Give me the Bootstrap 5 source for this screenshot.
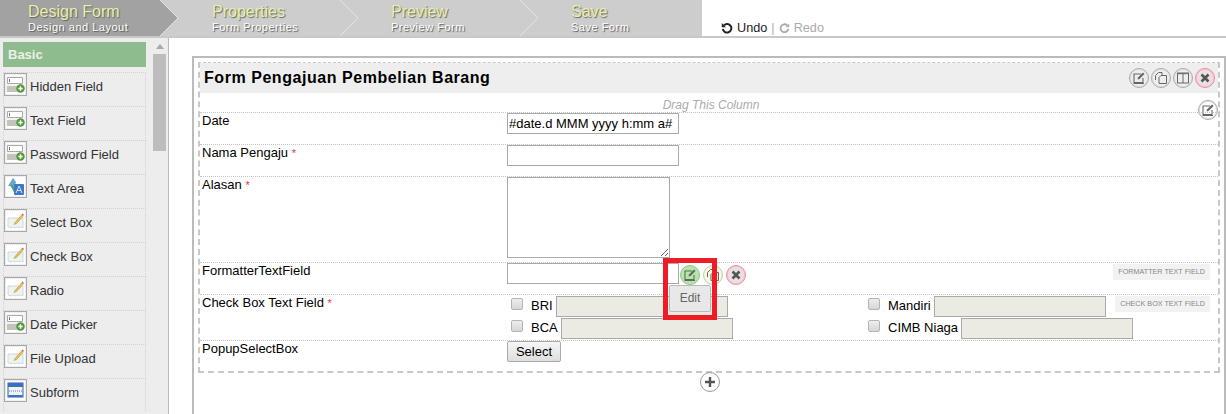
<!DOCTYPE html>
<html lang="id">
<head>
    <meta charset="UTF-8">
    <meta name="viewport" content="width=device-width, initial-scale=1">
    <title>Design Form</title>
    <link href="https://cdn.jsdelivr.net/npm/bootstrap@5.3.0/dist/css/bootstrap.min.css" rel="stylesheet">
    <style>
        html, body { height: 414px; overflow: hidden; }
        body { font-family: "Liberation Sans", Arial, sans-serif; font-size: 13px; line-height: 16px; color: #000; background: #fff; }

        /* wizard bar */
        .wiz-bar { height: 38px; border-bottom: 2px solid #c8c8c8; }
        .wiz-steps { width: 702px; height: 36px; background: #cdcdcd; }
        .wiz-step { width: 180px; height: 36px; position: relative; padding-left: 51px; flex: none; }
        .wiz-step:first-child { width: 160px; padding-left: 28px; background: #a2a2a2; }
        .wiz-step:nth-child(2) { padding-left: 52px; }
        .wiz-step:last-child { width: 182px; }
        .wiz-title { position: relative; font-size: 16px; line-height: 18px; padding-top: 3px; color: #e6f0a8; text-shadow: 1px 1px 1px #666; white-space: nowrap; }
        .wiz-sub { position: relative; font-size: 11px; line-height: 13px; color: #fff; text-shadow: 1px 1px 1px #555; white-space: nowrap; letter-spacing: .5px; }
        .wiz-arrow { position: absolute; top: 0; left: 100%; }
        .undo-box { padding: 19px 0 0 19px; font-size: 12.7px; line-height: 16px; color: #222; }
        .undo-box .off { color: #aaa; }

        /* main */
        .work { height: 376px; }
        .side { width: 169px; flex: none; background: #ededed; border-right: 1px solid #bbb; position: relative; overflow: hidden; padding: 4px 0 0 3px; }
        .side-head { width: 143px; height: 25px; background: #8fbc8f; color: #eaf2e4; font-weight: 700; font-size: 13px; line-height: 25px; padding-left: 5px; margin-bottom: 5px; }
        .tool-item { width: 143px; height: 34px; border: 1px dotted #d2d2d2; border-bottom: 0; color: #333; font-size: 13px; gap: 3px; }
        .tool-item span.tool-txt { padding-top: 6px; }
        .tool-ico { width: 23px; height: 23px; flex: none; border: 1px solid #a8a8a8; background: #fff; padding: 1px; box-shadow: inset 0 0 0 1px #eee; }
        .tool-ico svg { display: block; }
        .scroll-track { position: absolute; left: 153px; top: 0; width: 15px; height: 100%; }
        .scroll-up { position: absolute; left: 3px; top: 6px; width: 0; height: 0; border: 4px solid transparent; border-bottom: 5px solid #a8a8a8; border-top: 0; }
        .scroll-thumb { position: absolute; left: 0; top: 16px; width: 13px; height: 97px; background: #bdbdbd; }

        .canvas { flex: 1; padding: 18px 0 0 23px; min-width: 0; }
        .form-box { border: 2px solid #bbb; border-bottom: 0; height: 100%; padding: 4px 4px 0 4px; position: relative; }
        .form-sect { border: 1px dashed #c8c8c8; border-width: 1px 2px 2px 2px; height: 311px; position: relative; }
        .form-head { height: 30px; background: #eee; font-size: 16px; font-weight: 700; line-height: 30px; padding: 0 3px 0 4px; letter-spacing: .55px; }
        .drag-line { height: 19px; color: #aaa; font-size: 12px; font-style: italic; text-align: center; line-height: 24px; padding-left: 4px; }
        .f-row { border-top: 1px dotted #c4c4c4; position: relative; padding-left: 2px; }
        .f-row-top { z-index: 2; }
        .f-label { width: 305px; flex: none; line-height: 15px; font-size: 13px; }
        .req { color: #e33; font-size: 11px; }
        .f-in { border: 1px solid #a9a9a9; background: #fff; height: 21px; width: 172px; padding: 0 1px; font: 13px/17px "Liberation Sans", Arial, sans-serif; color: #000; display: block; border-radius: 0; }
        .f-in.off { background: #ebebe4; }
        .f-area { height: 81px; width: 163px; }
        .tag-box { background: #f2f2f2; color: #888; font-size: 7.2px; height: 16px; line-height: 16px; padding: 0 5px; position: absolute; right: 8px; white-space: nowrap; }
        .chk-box { appearance: none; width: 12px; height: 12px; flex: none; border: 1px solid #b4b4b4; border-radius: 2px; background: linear-gradient(#eee, #d6d6d6); margin: 0 8px 4px 4px; }
        .chk-line { height: 22px; white-space: nowrap; }
        .chk-line label { margin-right: 3px; font-size: 13px; }
        .btn-sel { display: block; height: 21px; width: 54px; padding: 0; font-size: 13px; line-height: 19px; color: #000; background: linear-gradient(#f6f6f6, #dedede); border: 1px solid #a9a9a9; border-radius: 2px; }

        /* round action buttons */
        .act { width: 20px; height: 20px; border-radius: 50%; border: 1px solid #aaa; background: #eee; flex: none; padding: 0; box-shadow: inset 0 0 0 1px #e0e0e0; }
        .act svg { display: block; margin: 2px; }
        .act.del { border-color: #f2899f; background: #e8e0e2; box-shadow: inset 0 0 0 1px #f8c4cf; }
        .act.ok { border-color: #8cc78c; background: #b4e6a8; box-shadow: none; }
        .act.dim { border-color: #c4c9a5; background: #f6f8e2; box-shadow: none; }
        .head-acts { gap: 2px; }
        .col-edit { position: absolute; right: 0; top: 37px; background: #fff; }
        .row-acts { position: absolute; left: 480px; top: 2px; gap: 3px; }
        .tip-edit { position: absolute; left: 469px; top: 22px; width: 42px; height: 27px; background: #e8e8e8; border: 1px solid #bbb; border-radius: 2px; color: #666; font-size: 12px; line-height: 25px; text-align: center; }
        .red-mark { position: absolute; left: 463px; top: -5px; width: 54px; height: 62px; border: 5px solid #ee1c25; pointer-events: none; }
        .add-col { position: absolute; left: 506px; top: 314px; width: 20px; height: 20px; border: 1px solid #999; border-radius: 50%; background: #fff; padding: 0; }
        .add-col svg { display: block; margin: 2px; }
    </style>
</head>
<body>
    <svg width="0" height="0" class="position-absolute">
        <symbol id="i-field" viewBox="0 0 19 19">
            <rect x="0" y="1" width="19" height="16" fill="#f3f3f3"/>
            <path d="M1.500 2.500h15v6h-15z" fill="#fff" stroke="#aaa"/>
            <path d="M3.500 4v3" stroke="#777"/>
            <rect x="1" y="11" width="14" height="6" fill="#c4c4bc"/>
            <circle cx="14.500" cy="13.500" r="4.200" fill="#4f9a3c"/>
            <path d="M14.500 11.300v4.400M12.300 13.500h4.400" stroke="#fff" stroke-width="1.500"/>
        </symbol>
        <symbol id="i-area" viewBox="0 0 19 19">
            <path d="M2 9 7 1l3 4-1 3 2 2-3 2-2-3z" fill="#62a8cc"/>
            <path d="M5 8l3 5 2 5" stroke="#5aa04a" stroke-width="2" fill="none"/>
            <rect x="8" y="7" width="10" height="11" rx="1" fill="#3f78cf"/>
            <path d="M10 16l3-7 3 7M11 13.500h4" stroke="#cfe0f8" fill="none"/>
        </symbol>
        <symbol id="i-pen" viewBox="0 0 19 19">
            <path d="M2 7h15v10l-2-1-2 1-2-1-2 1-2-1-2 1-3-1z" fill="#ecf4f3" stroke="#c2cccc" stroke-width=".7"/>
            <path d="M9 11.500 15.500 4l1.500 1.500-6.500 7-2.500 1z" fill="#ecc05a" stroke="#b5862c" stroke-width=".5"/>
            <path d="M15.500 3.500l1-1 1.500 1.500-1 1z" fill="#c8623e"/>
        </symbol>
        <symbol id="i-sub" viewBox="0 0 19 19">
            <rect x="2" y="2" width="15" height="14" fill="#eef3fb" stroke="#2f5fa8"/>
            <rect x="2" y="2" width="15" height="4" fill="#3b6fc0"/>
            <path d="M3 10h13" stroke="#777" stroke-dasharray="1 1"/>
            <rect x="2.500" y="14" width="14" height="2" fill="#3b6fc0"/>
        </symbol>
        <symbol id="a-edit" viewBox="0 0 14 14">
            <path d="M9 3H2v8.500h9V7" fill="none" stroke="#666" stroke-width="1.100"/>
            <path d="M5.500 8.500 6 6.500 11 1.500l1.500 1.500-5 5z" fill="#666"/>
            <path d="M1.500 12.500h10.500" stroke="#666"/>
        </symbol>
        <symbol id="a-copy" viewBox="0 0 14 14">
            <path d="M1.500 9V4.500L4.500 1.500H8V4" fill="none" stroke="#666"/>
            <path d="M5 12.500V6.500L7 4.500h5.500v8z" fill="#eee" stroke="#666"/>
        </symbol>
        <symbol id="a-cols" viewBox="0 0 14 14">
            <rect x="1.500" y="2" width="11" height="10" fill="none" stroke="#666"/>
            <path d="M7 2v10M1.500 2.700h11" stroke="#666"/>
        </symbol>
        <symbol id="a-del" viewBox="0 0 14 14">
            <path d="M3.500 3.500l7 7M10.500 3.500l-7 7" stroke="#555" stroke-width="2.600"/>
        </symbol>
    </svg>

    <div class="wiz-bar d-flex">
        <div class="wiz-steps d-flex">
            <div class="wiz-step">
                <svg class="wiz-arrow" width="20" height="36"><path d="M0 0 18 18 0 36z" fill="#a2a2a2"/><path d="M0 0 18 18 0 36" fill="none" stroke="#e2e2e2"/></svg>
                <div class="wiz-title">Design Form</div>
                <div class="wiz-sub">Design and Layout</div>
            </div>
            <div class="wiz-step">
                <svg class="wiz-arrow" width="20" height="36"><path d="M0 0 18 18 0 36" fill="none" stroke="#e2e2e2"/></svg>
                <div class="wiz-title">Properties</div>
                <div class="wiz-sub">Form Properties</div>
            </div>
            <div class="wiz-step">
                <svg class="wiz-arrow" width="20" height="36"><path d="M0 0 18 18 0 36" fill="none" stroke="#e2e2e2"/></svg>
                <div class="wiz-title">Preview</div>
                <div class="wiz-sub">Preview Form</div>
            </div>
            <div class="wiz-step">
                <div class="wiz-title">Save</div>
                <div class="wiz-sub">Save Form</div>
            </div>
        </div>
        <div class="undo-box d-flex align-items-center">
            <svg width="12" height="12" viewBox="0 0 12 12" class="me-1"><path d="M3 3.200A4.300 4.300 0 1 1 1.800 7" fill="none" stroke="#222" stroke-width="2"/><path d="M.8 1v4.200H5z" fill="#222"/></svg>
            <span>Undo</span><span class="off mx-1">|</span>
            <svg width="11" height="12" viewBox="0 0 12 12" class="me-1"><path d="M9 3.200A4.300 4.300 0 1 0 10.200 7" fill="none" stroke="#aaa" stroke-width="2"/><path d="M11.200 1v4.200H7z" fill="#aaa"/></svg>
            <span class="off">Redo</span>
        </div>
    </div>

    <div class="work d-flex">
        <div class="side">
            <div class="side-head">Basic</div>
            <div class="tool-item d-flex"><span class="tool-ico"><svg width="19" height="19"><use href="#i-field"/></svg></span><span class="tool-txt">Hidden Field</span></div>
            <div class="tool-item d-flex"><span class="tool-ico"><svg width="19" height="19"><use href="#i-field"/></svg></span><span class="tool-txt">Text Field</span></div>
            <div class="tool-item d-flex"><span class="tool-ico"><svg width="19" height="19"><use href="#i-field"/></svg></span><span class="tool-txt">Password Field</span></div>
            <div class="tool-item d-flex"><span class="tool-ico"><svg width="19" height="19"><use href="#i-area"/></svg></span><span class="tool-txt">Text Area</span></div>
            <div class="tool-item d-flex"><span class="tool-ico"><svg width="19" height="19"><use href="#i-pen"/></svg></span><span class="tool-txt">Select Box</span></div>
            <div class="tool-item d-flex"><span class="tool-ico"><svg width="19" height="19"><use href="#i-pen"/></svg></span><span class="tool-txt">Check Box</span></div>
            <div class="tool-item d-flex"><span class="tool-ico"><svg width="19" height="19"><use href="#i-pen"/></svg></span><span class="tool-txt">Radio</span></div>
            <div class="tool-item d-flex"><span class="tool-ico"><svg width="19" height="19"><use href="#i-field"/></svg></span><span class="tool-txt">Date Picker</span></div>
            <div class="tool-item d-flex"><span class="tool-ico"><svg width="19" height="19"><use href="#i-pen"/></svg></span><span class="tool-txt">File Upload</span></div>
            <div class="tool-item d-flex"><span class="tool-ico"><svg width="19" height="19"><use href="#i-sub"/></svg></span><span class="tool-txt">Subform</span></div>
            <div class="scroll-track">
                <span class="scroll-up"></span>
                <span class="scroll-thumb"></span>
            </div>
        </div>

        <div class="canvas">
            <div class="form-box">
                <div class="form-sect">
                    <div class="form-head d-flex justify-content-between align-items-center">
                        <span>Form Pengajuan Pembelian Barang</span>
                        <div class="head-acts d-flex">
                            <button class="act"><svg width="14" height="14"><use href="#a-edit"/></svg></button>
                            <button class="act"><svg width="14" height="14"><use href="#a-copy"/></svg></button>
                            <button class="act"><svg width="14" height="14"><use href="#a-cols"/></svg></button>
                            <button class="act del"><svg width="14" height="14"><use href="#a-del"/></svg></button>
                        </div>
                    </div>
                    <div class="drag-line">Drag This Column</div>
                    <button class="act col-edit"><svg width="14" height="14"><use href="#a-edit"/></svg></button>

                    <div class="f-row d-flex" style="height:32px">
                        <div class="f-label">Date</div>
                        <input class="f-in" type="text" value="#date.d MMM yyyy h:mm a#">
                    </div>
                    <div class="f-row d-flex" style="height:32px">
                        <div class="f-label">Nama Pengaju <span class="req">*</span></div>
                        <input class="f-in" type="text">
                    </div>
                    <div class="f-row d-flex" style="height:86px">
                        <div class="f-label">Alasan <span class="req">*</span></div>
                        <textarea class="f-in f-area"></textarea>
                    </div>
                    <div class="f-row f-row-top d-flex" style="height:32px">
                        <div class="f-label">FormatterTextField</div>
                        <input class="f-in" type="text">
                        <span class="tag-box" style="top:1px">FORMATTER TEXT FIELD</span>
                        <div class="row-acts d-flex">
                            <button class="act ok"><svg width="14" height="14"><use href="#a-edit"/></svg></button>
                            <button class="act dim"><svg width="14" height="14"><use href="#a-copy"/></svg></button>
                            <button class="act del"><svg width="14" height="14"><use href="#a-del"/></svg></button>
                        </div>
                        <div class="tip-edit">Edit</div>
                        <div class="red-mark"></div>
                    </div>
                    <div class="f-row d-flex" style="height:46px">
                        <div class="f-label">Check Box Text Field <span class="req">*</span></div>
                        <div class="d-flex">
                            <div style="width:357px">
                                <div class="chk-line d-flex align-items-center"><input type="checkbox" class="chk-box"><label>BRI</label><input class="f-in off" type="text"></div>
                                <div class="chk-line d-flex align-items-center"><input type="checkbox" class="chk-box"><label>BCA</label><input class="f-in off" type="text"></div>
                            </div>
                            <div>
                                <div class="chk-line d-flex align-items-center"><input type="checkbox" class="chk-box"><label>Mandiri</label><input class="f-in off" type="text"></div>
                                <div class="chk-line d-flex align-items-center"><input type="checkbox" class="chk-box"><label>CIMB Niaga</label><input class="f-in off" type="text"></div>
                            </div>
                        </div>
                        <span class="tag-box" style="top:1px">CHECK BOX TEXT FIELD</span>
                    </div>
                    <div class="f-row d-flex">
                        <div class="f-label">PopupSelectBox</div>
                        <button class="btn-sel">Select</button>
                    </div>
                </div>
                <button class="add-col"><svg width="14" height="14" viewBox="0 0 14 14"><path d="M7 2v10M2 7h10" stroke="#555" stroke-width="2.400"/></svg></button>
            </div>
        </div>
    </div>

    <script src="https://cdn.jsdelivr.net/npm/bootstrap@5.3.0/dist/js/bootstrap.bundle.min.js"></script>
</body>
</html>
